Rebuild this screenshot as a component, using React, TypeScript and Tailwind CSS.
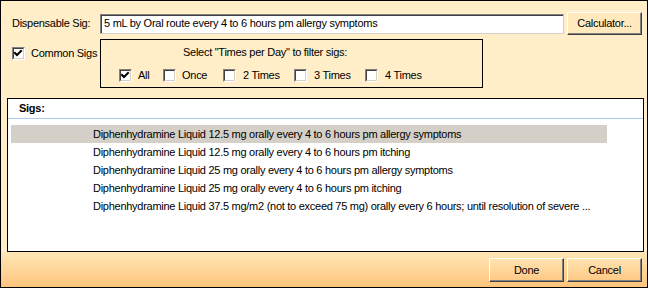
import React from "react";

const font = { fontFamily: '"Liberation Sans", Arial, sans-serif' };

function Check({ checked }: { checked?: boolean }) {
  return (
    <div className="w-[13px] h-[13px] border border-t-[#808080] border-l-[#808080] border-b-white border-r-white shrink-0">
      <div className="w-full h-full border border-t-[#404040] border-l-[#404040] border-b-[#d4d0c8] border-r-[#d4d0c8] bg-white relative">
        {checked && (
          <svg width="9" height="9" viewBox="0 0 9 9" className="absolute left-0 top-0">
            <path d="M1 4 L3 6 L7 2" stroke="#000" strokeWidth="2" fill="none" strokeLinecap="square" />
          </svg>
        )}
      </div>
    </div>
  );
}

function Btn({ children, className }: { children: React.ReactNode; className?: string }) {
  return (
    <div
      className={
        "flex items-center justify-center border border-t-white border-l-white border-r-[#404040] border-b-[#404040] shadow-[inset_-1px_-1px_0_#808080] text-[11px] text-black " +
        (className ?? "")
      }
    >
      {children}
    </div>
  );
}

const rows = [
  "Diphenhydramine Liquid 12.5 mg orally every 4 to 6 hours pm allergy symptoms",
  "Diphenhydramine Liquid 12.5 mg orally every 4 to 6 hours pm itching",
  "Diphenhydramine Liquid 25 mg orally every 4 to 6 hours pm allergy symptoms",
  "Diphenhydramine Liquid 25 mg orally every 4 to 6 hours pm itching",
  "Diphenhydramine Liquid 37.5 mg/m2 (not to exceed 75 mg) orally every 6 hours; until resolution of severe ...",
];

export default function App() {
  return (
    <div style={font} className="w-[648px] h-[288px] border border-black bg-[#ffeec8] flex flex-col text-[11px] tracking-[-0.27px] text-black overflow-hidden">
      {/* Row 1 */}
      <div className="flex items-center mt-[11px] h-[23px]">
        <div className="w-[99px] pl-[11px] whitespace-nowrap">Dispensable Sig:</div>
        <div className="w-[464px] h-[20px] bg-white border border-t-[#808080] border-l-[#808080] border-b-[#d4d0c8] border-r-[#d4d0c8] flex items-center pl-[3px] shadow-[inset_1px_1px_0_#404040] whitespace-nowrap">
          5 mL by Oral route every 4 to 6 hours pm allergy symptoms
        </div>
        <Btn className="ml-[3px] w-[75px] h-[23px] bg-[#ffe9bd]">Calculator...</Btn>
      </div>
      {/* Row 2 */}
      <div className="flex mt-[4px]">
        <div className="w-[99px] pl-[11px] pt-[8px] flex items-start gap-[6px] whitespace-nowrap">
          <Check checked />
          <span className="leading-[13px]">Common Sigs</span>
        </div>
        <div className="w-[383px] h-[49px] border border-black flex flex-col">
          <div className="mt-[6px] h-[13px] leading-[13px] pl-[82px] whitespace-nowrap">Select &quot;Times per Day&quot; to filter sigs:</div>
          <div className="flex mt-[10px] pl-[18px] leading-[13px] whitespace-nowrap">
            <div className="w-[44px] flex gap-[6px]"><Check checked /><span>All</span></div>
            <div className="w-[60px] flex gap-[6px]"><Check /><span>Once</span></div>
            <div className="w-[71px] flex gap-[7px]"><Check /><span>2 Times</span></div>
            <div className="w-[71px] flex gap-[7px]"><Check /><span>3 Times</span></div>
            <div className="w-[71px] flex gap-[7px]"><Check /><span>4 Times</span></div>
          </div>
        </div>
      </div>
      {/* Sigs panel */}
      <div className="ml-[6px] mt-[10px] w-[637px] h-[154px] border border-black bg-white flex flex-col">
        <div className="h-[20px] pl-[11px] flex items-center font-bold border-b border-[#a9cbe9]">Sigs:</div>
        <div className="mt-[6px] ml-[3px] flex flex-col">
          {rows.map((r, i) => (
            <div
              key={i}
              className={
                "h-[18px] w-[596px] pl-[82px] flex items-center whitespace-nowrap " +
                (i === 0 ? "bg-[#d4d0c8]" : "")
              }
            >
              {r}
            </div>
          ))}
        </div>
      </div>
      {/* Footer */}
      <div className="flex-1 bg-gradient-to-b from-[#ffe7b6] to-[#ffc47c] flex justify-end items-start pt-[6px] pr-[5px] gap-[3px]">
        <Btn className="w-[75px] h-[24px] bg-gradient-to-b from-[#ffe3b0] to-[#ffc885]">Done</Btn>
        <Btn className="w-[75px] h-[24px] bg-gradient-to-b from-[#ffe3b0] to-[#ffc885]">Cancel</Btn>
      </div>
    </div>
  );
}
